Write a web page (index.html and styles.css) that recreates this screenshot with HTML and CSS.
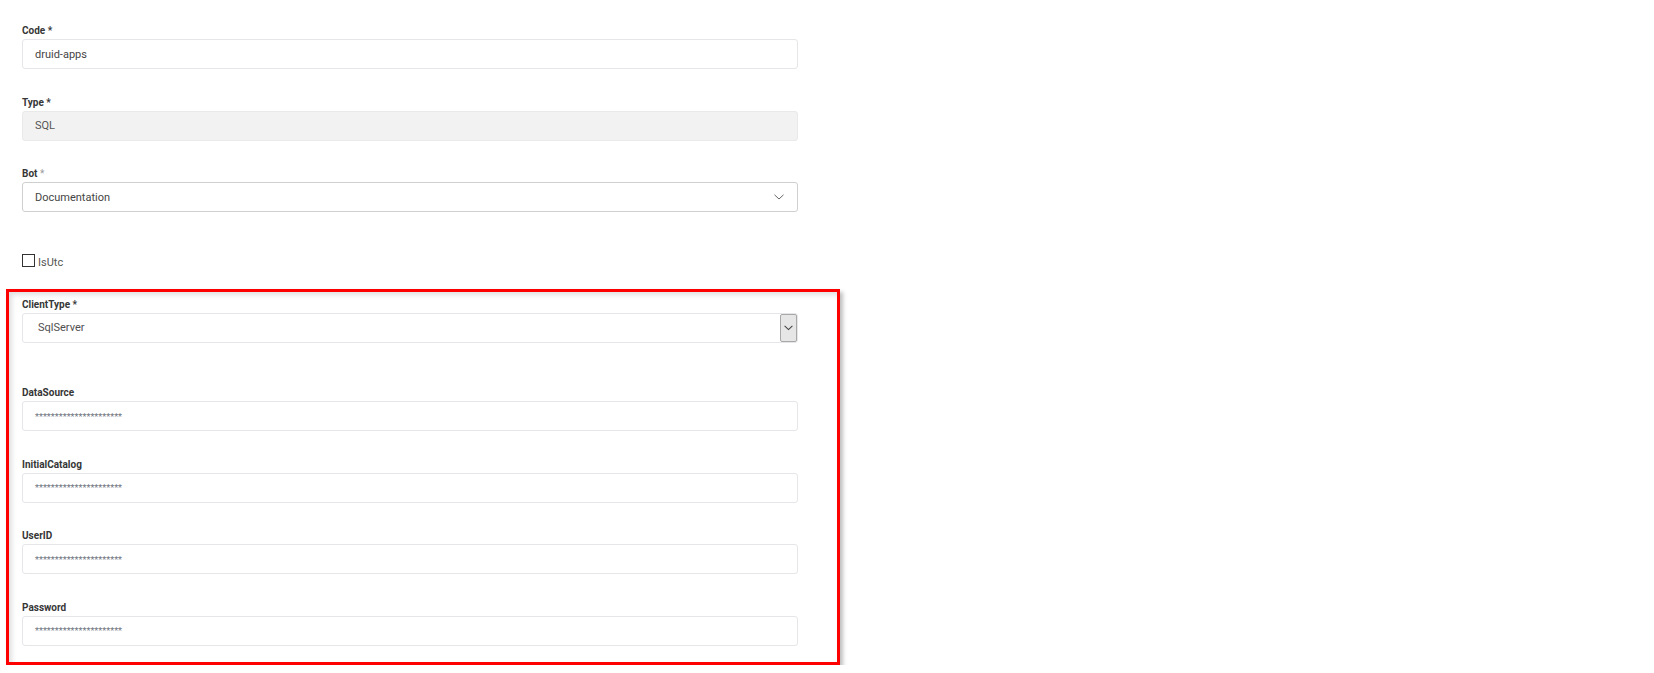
FILE: index.html
```html
<!DOCTYPE html>
<html lang="en">
  <head>
    <title>Connection - Edit</title>
    <meta charset="utf-8">
    <meta name="viewport" content="width=device-width, initial-scale=1.0">
    <link rel="stylesheet" href="styles.css">
  </head>
  <body>
    <form class="form">
      <div class="field">
        <label class="field-label">Code *</label>
        <div class="input">druid-apps</div>
      </div>

      <div class="field">
        <label class="field-label">Type *</label>
        <div class="input readonly">SQL</div>
      </div>

      <div class="field">
        <label class="field-label">Bot <span class="req-light">*</span></label>
        <div class="input select">
          <span>Documentation</span>
          <svg class="chevron" width="10" height="6" viewBox="0 0 10 6">
            <path d="M0.5 0.8 L5 5 L9.5 0.8" fill="none" stroke="#666" stroke-width="1"/>
          </svg>
        </div>
      </div>

      <div class="check-row">
        <span class="checkbox"></span>
        <span class="check-text">IsUtc</span>
      </div>

      <!-- Connection settings -->
      <div class="highlight">
        <div class="field field-wide">
          <label class="field-label">ClientType *</label>
          <div class="input native-select">
            <span>SqlServer</span>
            <span class="select-btn">
              <svg width="9" height="6" viewBox="0 0 9 6">
                <path d="M0.6 0.8 L4.5 4.6 L8.4 0.8" fill="none" stroke="#444" stroke-width="1.1"/>
              </svg>
            </span>
          </div>
        </div>

        <div class="field">
          <label class="field-label">DataSource</label>
          <div class="input masked">**********************</div>
        </div>

        <div class="field">
          <label class="field-label">InitialCatalog</label>
          <div class="input masked">**********************</div>
        </div>

        <div class="field">
          <label class="field-label">UserID</label>
          <div class="input masked">**********************</div>
        </div>

        <div class="field">
          <label class="field-label">Password</label>
          <div class="input masked">**********************</div>
        </div>
      </div>
    </form>
  </body>
</html>
```

FILE: styles.css
```css
* {
  margin: 0;
  padding: 0;
  box-sizing: border-box;
}

body {
  font-family: Roboto, "Liberation Sans", Arial, sans-serif;
  background: #ffffff;
  color: #333333;
}

.form {
  width: 798px;
  padding: 24px 0 0 22px;
}

.field {
  margin-bottom: 26.5px;
}

.field:last-child {
  margin-bottom: 0;
}

.field-wide {
  margin-bottom: 43.5px;
}

.field-label {
  display: block;
  height: 14px;
  line-height: 14px;
  margin-bottom: 1px;
  font-size: 10px;
  font-weight: 700;
  color: #363636;
}

.req-light {
  color: #9a9a9a;
  font-weight: 400;
}

.input {
  height: 30px;
  display: flex;
  align-items: center;
  padding: 0 12px;
  border: 1px solid #e6e6ea;
  border-radius: 3px;
  background: #ffffff;
  font-size: 11px;
  color: #454545;
}

.input.readonly {
  background: #f2f2f2;
  border-color: #e9e9e9;
  color: #555555;
}

.input.select {
  justify-content: space-between;
  border-color: #cfcfcf;
  padding-right: 13px;
}

.input.native-select {
  justify-content: space-between;
  padding: 0 0 0 15px;
  color: #505050;
}

.select-btn {
  width: 17px;
  height: 28px;
  display: flex;
  align-items: center;
  justify-content: center;
  background: #e6e6e6;
  border: 1px solid #a8a8a8;
  border-radius: 2px;
}

.input.masked {
  font-size: 9.2px;
  color: #6e7480;
}

.check-row {
  display: flex;
  align-items: flex-end;
  gap: 3px;
  height: 13px;
  margin: 41.5px 0 22px;
}

.checkbox {
  width: 13px;
  height: 13px;
  border: 1.5px solid #333333;
  background: #ffffff;
}

.check-text {
  font-size: 11px;
  line-height: 8px;
  color: #555555;
}

/* Highlighted block */
.highlight {
  margin: 0 -42px 0 -16px;
  padding: 6px 39px 16.5px 13px;
  border: 3px solid #ff0000;
  box-shadow:
    3px 3px 4px rgba(0, 0, 0, 0.25),
    inset 3px 3px 5px rgba(0, 0, 0, 0.12);
}
```
